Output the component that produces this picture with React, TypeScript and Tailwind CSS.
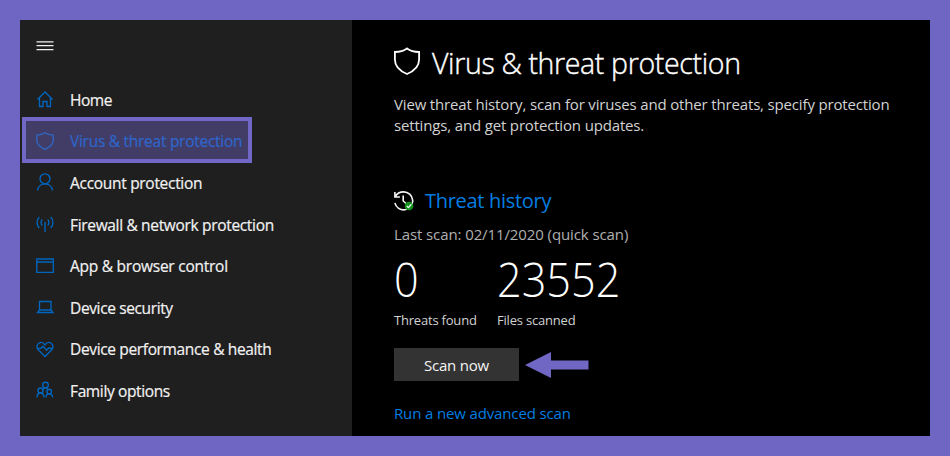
import type { ReactNode } from "react";

const navItems: { label: string; icon: ReactNode; tracking: string; active?: boolean }[] = [
  {
    label: "Home",
    tracking: "tracking-[-0.45px]",
    icon: <path d="M1.500 9.500 9 2l7.500 7.500M3.500 8v8.500h3.500v-5h4v5h3.500V8" />,
  },
  {
    label: "Virus & threat protection",
    tracking: "tracking-[-0.27px]",
    active: true,
    icon: <path d="M9 .8C7 2.400 4 3.100 .8 3.100v5.200C.8 12.500 5 15.500 9 17.300c4-1.800 8.200-4.800 8.200-9V3.100C14 3.100 11 2.400 9 .8Z" />,
  },
  {
    label: "Account protection",
    tracking: "tracking-[-0.3px]",
    icon: (
      <>
        <circle cx="9" cy="5.800" r="5" />
        <path d="M1.500 17.500C2 13.500 5 10.800 9 10.800s7 2.700 7.500 6.700" />
      </>
    ),
  },
  {
    label: "Firewall & network protection",
    tracking: "tracking-[-0.33px]",
    icon: (
      <path d="M9 7v10M6.300 10.500c-1.600-1.500-1.600-4.500 0-6M11.700 10.500c1.600-1.500 1.600-4.500 0-6M3.300 13C.3 10 .3 5 3.300 2M14.700 13c3-3 3-8 0-11" />
    ),
  },
  {
    label: "App & browser control",
    tracking: "tracking-[-0.25px]",
    icon: <path d="M.8 2h16.500v13.300H.8zM.8 5h16.500" />,
  },
  {
    label: "Device security",
    tracking: "tracking-[-0.37px]",
    icon: <path d="M3.500 3.500h11.500v8.500h-11.500zM3.500 12l-2 2.500h15.500l-2-2.500" />,
  },
  {
    label: "Device performance & health",
    tracking: "tracking-[-0.35px]",
    icon: (
      <path d="M9 16.500 2.300 9.800C.3 7.500.8 4.500 2.800 3.200 5 1.800 7.500 2.500 9 4.800c1.500-2.300 4-3 6.200-1.600 2 1.300 2.500 4.300.5 6.600ZM1.800 8.300h3l2.200-2.100 3.500 4 2-2h4" />
    ),
  },
  {
    label: "Family options",
    tracking: "tracking-[-0.37px]",
    icon: (
      <>
        <circle cx="9.500" cy="4" r="2.800" />
        <circle cx="4.500" cy="9.500" r="2.500" />
        <circle cx="13.200" cy="10.500" r="2.300" />
        <path d="M1 16.500c0-2.500 1.300-4.500 3.500-4.500S8 14 8 16.500M10 16.500c0-2 1.200-3.700 3.200-3.700s3.300 1.700 3.300 3.700M7 9c.5-1.500 1.300-2.200 2.500-2.200 1 0 1.700.4 2.200 1.200" />
      </>
    ),
  },
];

function Sidebar() {
  return (
    <aside className="w-[332px] shrink-0 bg-[#1f1f1f]">
      <div className="flex h-[59px] items-start pt-[21px] pl-4">
        <svg viewBox="0 0 18 10" className="h-2.5 w-[18px]" stroke="#f0f0f0" strokeWidth="1.200">
          <path d="M.5 .8h17M.5 4.700h17M.5 8.600h17" />
        </svg>
      </div>
      <nav>
        {navItems.map((item) => (
          <div key={item.label} className="relative flex h-[41.6px] items-center pl-4">
            <svg
              viewBox="0 0 18 18"
              className="-mt-px size-[18px] shrink-0"
              fill="none"
              stroke="#0066c0"
              strokeWidth="1.350"
            >
              {item.icon}
            </svg>
            <span
              className={`ml-4 text-[15.5px] leading-5 whitespace-nowrap [-webkit-text-stroke:0.2px] ${item.tracking} ${
                item.active ? "text-[#0065ce]" : "text-[#f2f2f2]"
              }`}
            >
              {item.label}
            </span>
            {item.active && (
              <div className="absolute top-[-4px] left-[2px] h-[46px] w-[230px] border-4 border-[#7167c7] bg-[#7167c7]/42 bg-clip-padding" />
            )}
          </div>
        ))}
      </nav>
    </aside>
  );
}

function HistoryIcon() {
  return (
    <svg viewBox="0 0 20 20" className="size-5 shrink-0" fill="none" stroke="#f5f5f5" strokeWidth="1.600">
      <path d="M1.500 5.500C3 2.500 6 .9 9.500.9a9 9 0 1 1-8.600 11M.9 1v5h5M9.200 4.500v5.500l3 2.500" />
      <circle cx="15" cy="15" r="4.300" fill="#10931a" stroke="none" />
      <path d="m12.800 15 1.600 1.600 3-3.300" strokeWidth="1.300" />
    </svg>
  );
}

export default function App() {
  return (
    <div className="flex h-[456px] w-[950px] bg-[#6f66c4] p-5 font-['Open_Sans','Noto_Sans',sans-serif]">
      <Sidebar />
      <main className="flex-1 bg-black pl-[42px] text-white">
        <div className="flex items-center pt-[23px]">
          <svg viewBox="0 0 26 28" className="-mt-1 h-7 w-[26px]" fill="none" stroke="#fff" strokeWidth="1.800">
            <path d="M13 1.500C9.500 4.200 5 5 .9 5v7.500C.9 19.500 7 24.500 13 27c6-2.500 12.100-7.500 12.100-14.500V5C21 5 16.500 4.200 13 1.500Z" />
          </svg>
          <h1 className="ml-3 text-[28.5px] leading-10 font-light tracking-[-0.35px] whitespace-nowrap [-webkit-text-stroke:0.4px]">
            Virus &amp; threat protection
          </h1>
        </div>
        <p className="mt-[11px] text-[15px] leading-[21px] tracking-[-0.16px] whitespace-nowrap text-[#d2d2d2]">
          View threat history, scan for viruses and other threats, specify protection
          <br />
          settings, and get protection updates.
        </p>
        <div className="mt-[49px] flex h-8 items-center">
          <HistoryIcon />
          <h2 className="ml-[11px] text-[20px] leading-8 tracking-[-0.3px] text-[#007ee2]">Threat history</h2>
        </div>
        <p className="mt-[7px] text-[15px] leading-5 tracking-[-0.1px] text-[#b0b0b0]">
          Last scan: 02/11/2020 (quick scan)
        </p>
        <div className="mt-[11px] flex">
          <div className="w-[103px]">
            <div className="origin-left scale-x-90 text-[48px] leading-[48px] font-light">0</div>
            <div className="mt-[7px] text-[13px] leading-5 tracking-[-0.2px] text-[#d2d2d2]">Threats found</div>
          </div>
          <div>
            <div className="w-[136px] origin-left scale-x-90 text-[48px] leading-[48px] font-light">23552</div>
            <div className="mt-[7px] text-[13px] leading-5 tracking-[-0.2px] text-[#d2d2d2]">Files scanned</div>
          </div>
        </div>
        <div className="mt-[18px] flex items-center">
          <button className="h-[33px] w-[125px] bg-[#333333] pt-px text-[15px] tracking-[-0.2px] text-[#f5f5f5]">
            Scan now
          </button>
          <svg viewBox="0 0 64 28" className="ml-1.5 h-7 w-16" fill="#7067c5">
            <path d="M0 14 26 1v8.500h37.500v9H26V27Z" />
          </svg>
        </div>
        <a className="mt-[22px] block text-[15px] leading-5 tracking-[-0.14px] text-[#007ee2]">
          Run a new advanced scan
        </a>
      </main>
    </div>
  );
}
